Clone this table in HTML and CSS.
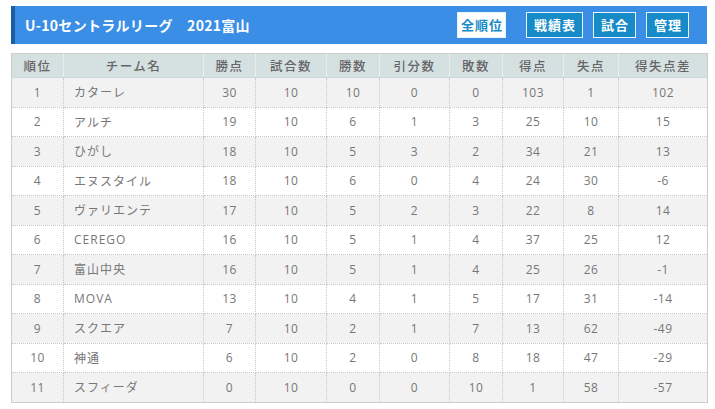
FILE: index.html
```html
<!DOCTYPE html>
<html lang="ja">
<head>
<meta charset="utf-8">
<title>U-10セントラルリーグ 2021富山</title>
<link rel="stylesheet" href="styles.css">
</head>
<body>
<div class="page">
  <div class="titlebar">
    <h1 class="title">U-10セントラルリーグ　2021富山</h1>
    <nav class="tabs">
      <a class="tab tab-active">全順位</a>
      <a class="tab">戦績表</a>
      <a class="tab">試合</a>
      <a class="tab">管理</a>
    </nav>
  </div>
  <table class="standings">
    <colgroup>
      <col class="c-rank"><col class="c-team"><col class="c-pts"><col class="c-games"><col class="c-win"><col class="c-draw"><col class="c-loss"><col class="c-gf"><col class="c-ga"><col class="c-gd">
    </colgroup>
    <thead>
      <tr><th>順位</th><th>チーム名</th><th>勝点</th><th>試合数</th><th>勝数</th><th>引分数</th><th>敗数</th><th>得点</th><th>失点</th><th>得失点差</th></tr>
    </thead>
    <tbody>
      <tr><td>1</td><td class="team">カターレ</td><td>30</td><td>10</td><td>10</td><td>0</td><td>0</td><td>103</td><td>1</td><td>102</td></tr>
      <tr><td>2</td><td class="team">アルチ</td><td>19</td><td>10</td><td>6</td><td>1</td><td>3</td><td>25</td><td>10</td><td>15</td></tr>
      <tr><td>3</td><td class="team">ひがし</td><td>18</td><td>10</td><td>5</td><td>3</td><td>2</td><td>34</td><td>21</td><td>13</td></tr>
      <tr><td>4</td><td class="team">エヌスタイル</td><td>18</td><td>10</td><td>6</td><td>0</td><td>4</td><td>24</td><td>30</td><td>-6</td></tr>
      <tr><td>5</td><td class="team">ヴァリエンテ</td><td>17</td><td>10</td><td>5</td><td>2</td><td>3</td><td>22</td><td>8</td><td>14</td></tr>
      <tr><td>6</td><td class="team">CEREGO</td><td>16</td><td>10</td><td>5</td><td>1</td><td>4</td><td>37</td><td>25</td><td>12</td></tr>
      <tr><td>7</td><td class="team">富山中央</td><td>16</td><td>10</td><td>5</td><td>1</td><td>4</td><td>25</td><td>26</td><td>-1</td></tr>
      <tr><td>8</td><td class="team">MOVA</td><td>13</td><td>10</td><td>4</td><td>1</td><td>5</td><td>17</td><td>31</td><td>-14</td></tr>
      <tr><td>9</td><td class="team">スクエア</td><td>7</td><td>10</td><td>2</td><td>1</td><td>7</td><td>13</td><td>62</td><td>-49</td></tr>
      <tr><td>10</td><td class="team">神通</td><td>6</td><td>10</td><td>2</td><td>0</td><td>8</td><td>18</td><td>47</td><td>-29</td></tr>
      <tr><td>11</td><td class="team">スフィーダ</td><td>0</td><td>10</td><td>0</td><td>0</td><td>10</td><td>1</td><td>58</td><td>-57</td></tr>
    </tbody>
  </table>
</div>
</body>
</html>
```
FILE: styles.css
```css
html, body {
  margin: 0;
  padding: 0;
  background: #fff;
}
body {
  font-family: "Open Sans", "Noto Sans CJK JP", sans-serif;
  color: #666;
}
.page {
  padding: 6px 0 0 11px;
  width: 696px;
}
.titlebar {
  display: flex;
  align-items: center;
  justify-content: space-between;
  height: 38px;
  background: #3a8ee6;
  border-left: 4px solid #1b5ea6;
  box-sizing: border-box;
  padding: 0 18px 0 10px;
}
.title {
  margin: 0;
  font-size: 14px;
  font-weight: bold;
  color: #fff;
  font-family: "Noto Sans CJK JP", sans-serif;
  letter-spacing: 0.3px;
}
.tabs {
  display: flex;
  gap: 10px;
  align-items: center;
}
.tab {
  display: block;
  height: 26px;
  line-height: 24px;
  box-sizing: border-box;
  padding: 0 6px 0 7px;
  background: #168bc7;
  border: 1px solid #e8f4fb;
  color: #fff;
  font-size: 13px;
  font-weight: bold;
  font-family: "Noto Sans CJK JP", sans-serif;
  letter-spacing: 1px;
}
.tab-active {
  background: #fff;
  color: #168bc7;
  padding: 0 2px 0 3px;
  margin-right: 10px;
}
.standings {
  margin-top: 9px;
  width: 696px;
  table-layout: fixed;
  border-collapse: collapse;
  border: 1px solid #ccc;
  font-size: 12px;
}
.c-rank { width: 52px; }
.c-team { width: 140px; }
.c-pts { width: 52px; }
.c-games { width: 71px; }
.c-win { width: 53px; }
.c-draw { width: 70px; }
.c-loss { width: 53px; }
.c-gf { width: 61px; }
.c-ga { width: 55px; }
.c-gd { width: 89px; }
.standings th {
  height: 23px;
  padding: 0;
  background: #d5e0e1;
  color: #666;
  font-size: 12.5px;
  font-weight: 500;
  font-family: "Noto Sans CJK JP", sans-serif;
  border-left: 1px solid #e6eded;
  border-bottom: 1px solid #cfd6d6;
  letter-spacing: 1.5px;
}
.standings th:first-child { border-left: none; }
.standings td {
  height: 28.5px;
  padding: 0;
  text-align: center;
  color: #777;
  border: 1px dotted #c8c8c8;
  letter-spacing: 0.5px;
}
.standings td.team {
  text-align: left;
  padding-left: 10px;
  font-family: "Open Sans", "Noto Sans CJK JP", sans-serif;
  letter-spacing: 1px;
}
.standings tbody tr:nth-child(odd) td { background: #f2f2f2; }
.standings tbody tr:nth-child(even) td { background: #fff; }
```
